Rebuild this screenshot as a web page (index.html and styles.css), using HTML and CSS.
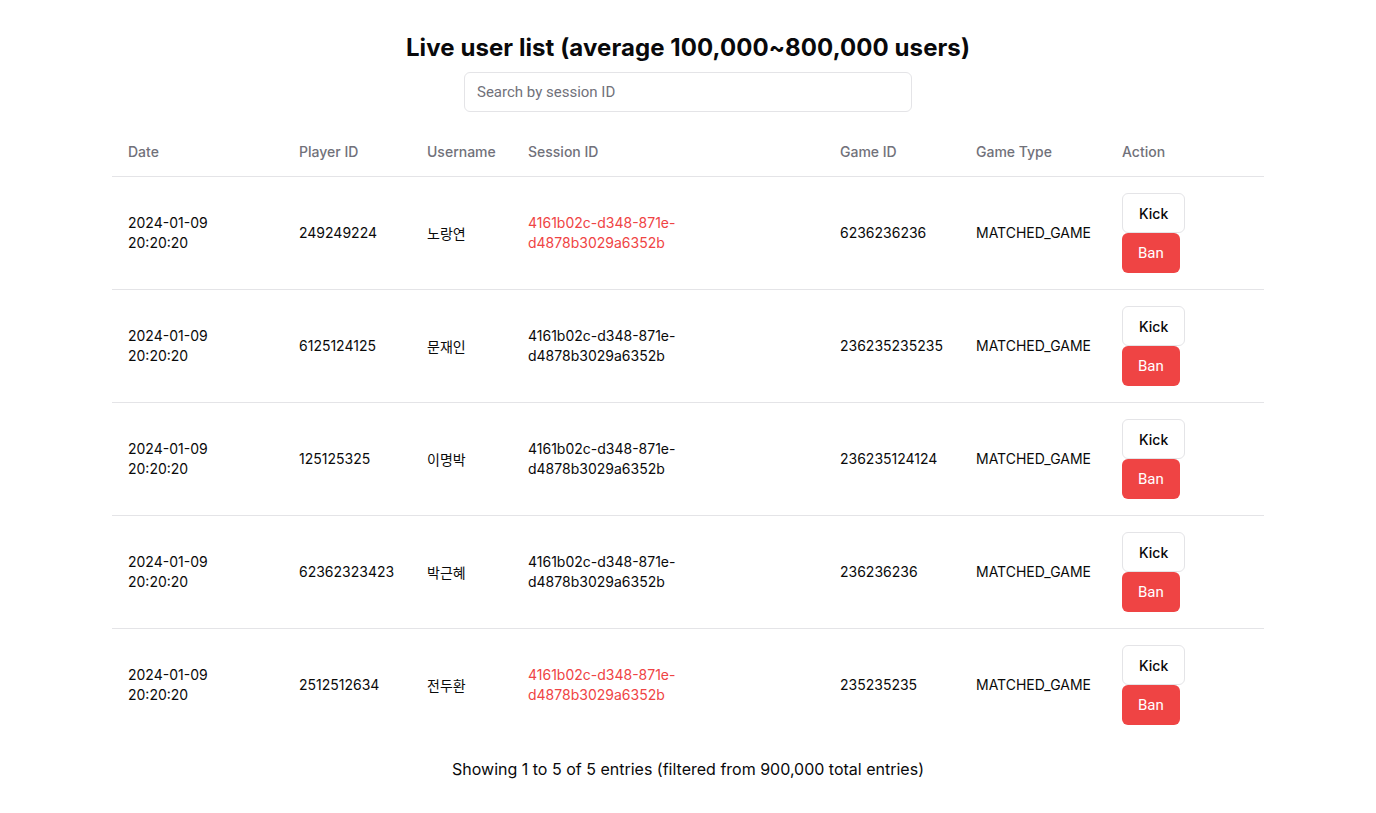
FILE: index.html
```html
<!DOCTYPE html>
<html lang="en">
<head>
<meta charset="utf-8">
<title>Live user list</title>
<link rel="stylesheet" href="styles.css">
</head>
<body>
<main class="page">
  <h1 class="title">Live user list (average 100,000~800,000 users)</h1>
  <div class="search-wrap">
    <input class="search" type="text" placeholder="Search by session ID">
  </div>
  <table class="users">
    <colgroup>
      <col class="c-date"><col class="c-player"><col class="c-user"><col class="c-session"><col class="c-game"><col class="c-type"><col class="c-action">
    </colgroup>
    <thead>
      <tr><th>Date</th><th>Player ID</th><th>Username</th><th>Session ID</th><th>Game ID</th><th>Game Type</th><th>Action</th></tr>
    </thead>
    <tbody>
      <tr>
        <td><div class="wrap-date">2024-01-09 20:20:20</div></td>
        <td>249249224</td>
        <td class="kr">노랑연</td>
        <td><div class="sid red">4161b02c-d348-871e-d4878b3029a6352b</div></td>
        <td>6236236236</td>
        <td>MATCHED_GAME</td>
        <td><div class="actions"><button class="btn kick">Kick</button><button class="btn ban">Ban</button></div></td>
      </tr>
      <tr>
        <td><div class="wrap-date">2024-01-09 20:20:20</div></td>
        <td>6125124125</td>
        <td class="kr">문재인</td>
        <td><div class="sid">4161b02c-d348-871e-d4878b3029a6352b</div></td>
        <td>236235235235</td>
        <td>MATCHED_GAME</td>
        <td><div class="actions"><button class="btn kick">Kick</button><button class="btn ban">Ban</button></div></td>
      </tr>
      <tr>
        <td><div class="wrap-date">2024-01-09 20:20:20</div></td>
        <td>125125325</td>
        <td class="kr">이명박</td>
        <td><div class="sid">4161b02c-d348-871e-d4878b3029a6352b</div></td>
        <td>236235124124</td>
        <td>MATCHED_GAME</td>
        <td><div class="actions"><button class="btn kick">Kick</button><button class="btn ban">Ban</button></div></td>
      </tr>
      <tr>
        <td><div class="wrap-date">2024-01-09 20:20:20</div></td>
        <td>62362323423</td>
        <td class="kr">박근혜</td>
        <td><div class="sid">4161b02c-d348-871e-d4878b3029a6352b</div></td>
        <td>236236236</td>
        <td>MATCHED_GAME</td>
        <td><div class="actions"><button class="btn kick">Kick</button><button class="btn ban">Ban</button></div></td>
      </tr>
      <tr class="last">
        <td><div class="wrap-date">2024-01-09 20:20:20</div></td>
        <td>2512512634</td>
        <td class="kr">전두환</td>
        <td><div class="sid red">4161b02c-d348-871e-d4878b3029a6352b</div></td>
        <td>235235235</td>
        <td>MATCHED_GAME</td>
        <td><div class="actions"><button class="btn kick">Kick</button><button class="btn ban">Ban</button></div></td>
      </tr>
    </tbody>
  </table>
  <p class="footer">Showing 1 to 5 of 5 entries (filtered from 900,000 total entries)</p>
</main>
</body>
</html>
```
FILE: styles.css
```css
* { box-sizing: border-box; }
html, body { margin: 0; padding: 0; background: #fff; }
body {
  font-family: Inter, "Noto Sans CJK KR", sans-serif;
  font-size: 14px;
  line-height: 20px;
  color: #0a0a0a;
}
.page {
  display: flex;
  flex-direction: column;
  align-items: center;
  padding-top: 32px;
}
.title {
  margin: 0;
  font-size: 24px;
  line-height: 32px;
  font-weight: 700;
  letter-spacing: 0.08px;
  color: #09090b;
}
.search-wrap { margin-top: 8px; width: 448px; }
.search {
  width: 100%;
  height: 40px;
  border: 1px solid #e4e4e7;
  border-radius: 6px;
  padding: 0 12px;
  font-family: Roboto, Inter, sans-serif;
  font-size: 15px;
  color: #111;
  outline: none;
  background: #fff;
}
.search::placeholder { color: #71717a; }
.users {
  margin-top: 12px;
  width: 1152px;
  border-collapse: collapse;
  table-layout: fixed;
}
.c-date { width: 171px; }
.c-player { width: 128px; }
.c-user { width: 101px; }
.c-session { width: 312px; }
.c-game { width: 136px; }
.c-type { width: 146px; }
.c-action { width: 158px; }
.users th {
  text-align: left;
  font-weight: 500;
  color: #71717a;
  padding: 18px 16px 14px;
  border-bottom: 1px solid #e4e4e7;
}
.users td {
  padding: 16px;
  vertical-align: middle;
  border-bottom: 1px solid #e4e4e7;
}
.users tr.last td { border-bottom: none; }
.wrap-date { max-width: 90px; }
.kr { font-family: "Noto Sans CJK KR", Inter, sans-serif; line-height: 18px; }
.sid { max-width: 165px; }
.red { color: #ef4444; }
.actions {
  display: flex;
  flex-direction: column;
  align-items: flex-start;
}
.btn {
  height: 40px;
  padding: 0 16px;
  border-radius: 6px;
  font-size: 14px;
  font-weight: 500;
  cursor: pointer;
}
.kick {
  height: 40px;
  background: #fff;
  border: 1px solid #e4e4e7;
  color: #09090b;
  font-family: Inter, sans-serif;
}
.ban {
  background: #ef4444;
  border: none;
  color: #fff;
  font-family: Roboto, Inter, sans-serif;
  font-size: 15px;
  font-weight: 400;
}
.footer {
  margin: 16px 0 0;
  text-align: center;
  font-size: 16px;
  line-height: 24px;
  color: #09090b;
}
```
